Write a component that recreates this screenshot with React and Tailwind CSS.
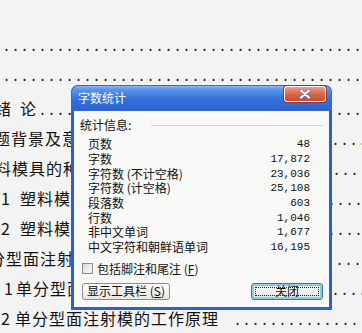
const DOTS = '.'.repeat(44)

function Leader() {
  return (
    <span className="font-['Liberation_Mono',monospace] text-[15px] tracking-normal text-[#222]">{DOTS}</span>
  )
}

function DocLine({ children }) {
  return (
    <div className="flex h-[30px] items-baseline whitespace-nowrap leading-[30px] text-[16px] tracking-[1px] text-[#111]">
      {children}
      <Leader />
    </div>
  )
}

const ROWS = [
  { label: '页数', value: '48' },
  { label: '字数', value: '17,872' },
  { label: '字符数 (不计空格)', value: '23,036' },
  { label: '字符数 (计空格)', value: '25,108' },
  { label: '段落数', value: '603' },
  { label: '行数', value: '1,046' },
  { label: '非中文单词', value: '1,677' },
  { label: '中文字符和朝鲜语单词', value: '16,195' },
]

function CloseButton() {
  return (
    <button
      type="button"
      className="flex h-[16px] w-[42px] items-center justify-center rounded-[3px] border border-white
                 bg-[linear-gradient(to_bottom,#f0a08c_0%,#de6a4f_45%,#c44a2e_100%)] shadow-[0_0_0_1px_#8a3a2a]"
    >
      <svg width="14" height="10" viewBox="0 0 14 10">
        <path d="M3 1.5 L11 8.5 M11 1.5 L3 8.5" stroke="#5a6fa8" strokeWidth="3.6" strokeLinecap="round" />
        <path d="M3 1.5 L11 8.5 M11 1.5 L3 8.5" stroke="#ffffff" strokeWidth="2.2" strokeLinecap="round" />
      </svg>
    </button>
  )
}

function WordCountDialog() {
  return (
    <div className="absolute left-[71px] top-[85px] flex h-[225px] w-[261px] flex-col font-['Noto_Sans_CJK_SC',sans-serif]">
      {/* Title bar */}
      <div className="flex h-[26px] shrink-0 items-start justify-between rounded-t-[7px] pl-[7px] pr-[6px] pt-px
                      bg-[linear-gradient(to_bottom,#9cc0f5_0%,#5b93ea_18%,#3470dc_55%,#2a63d4_100%)]
                      shadow-[inset_0_0_0_1px_#3a68c8]">
        <span className="mt-[5px] text-[12px] leading-[14px] text-white">字数统计</span>
        <CloseButton />
      </div>

      {/* Body */}
      <div className="flex flex-1 flex-col border-x-[3px] border-b-[3px] border-[#2b5fd3] bg-[#f8f8f6] text-[12px] text-[#111]">
        <div className="mt-[7px] flex items-center pl-[6px] pr-[5px]">
          <span className="leading-[14px]">统计信息:</span>
          <div className="ml-[20px] h-px flex-1 bg-[#d4d4cc]" />
        </div>

        <div className="mt-[5px] pl-[14px] pr-[19px]">
          {ROWS.map(r => (
            <div key={r.label} className="flex h-[14.7px] items-center justify-between leading-[14px]">
              <span>{r.label}</span>
              <span className="font-['Liberation_Mono',monospace] text-[11px]">{r.value}</span>
            </div>
          ))}
        </div>

        <div className="mt-[7px] flex items-center pl-[8px]">
          <span className="h-[11px] w-[11px] border border-[#8f8f8a] bg-[linear-gradient(135deg,#d8d8d2,#ffffff)]" />
          <span className="ml-[4px] leading-[14px]">
            包括脚注和尾注 (<span className="underline">F</span>)
          </span>
        </div>

        <div className="mt-[7px] flex items-center justify-between pl-[8px] pr-[6px]">
          <button
            type="button"
            className="flex h-[17px] w-[88px] items-center justify-center rounded-[3px] border border-[#8c8c88]
                       bg-[linear-gradient(to_bottom,#ffffff,#e6e6e2)] text-[12px] leading-[14px]"
          >
            显示工具栏 (<span className="underline">S</span>)
          </button>
          <button
            type="button"
            className="relative flex h-[17px] w-[72px] items-center justify-center rounded-[3px] border border-[#3d7a98]
                       bg-[linear-gradient(to_bottom,#ffffff,#e4e4e0)] text-[12px] leading-[14px]
                       shadow-[inset_0_0_0_2px_#8ccbe4]"
          >
            <span className="absolute inset-[3px] border border-dotted border-[#222]" />
            关闭
          </button>
        </div>
      </div>
    </div>
  )
}

export default function App() {
  return (
    <div className="relative h-[333px] w-[362px] overflow-hidden bg-[#f3f3f3] font-['Noto_Sans_CJK_SC',sans-serif]">
      <div className="flex flex-col pt-[33px]">
        <DocLine><span className="ml-[2px]" /></DocLine>
        <DocLine><span className="ml-[2px]" /></DocLine>
        <DocLine><span className="ml-[-5px]">绪</span><span className="ml-[8px] mr-[1px]">论</span></DocLine>
        <DocLine><span className="ml-[-23px] mr-[1px]">课题背景及意义</span></DocLine>
        <DocLine><span className="ml-[-22px] mr-[1px]">塑料模具的种类</span></DocLine>
        <DocLine><span className="ml-[1px]">1</span><span className="ml-[9px] mr-[1px]">塑料模具的成型方法</span></DocLine>
        <DocLine><span className="ml-[1px]">2</span><span className="ml-[9px] mr-[1px]">塑料模具的发展趋势</span></DocLine>
        <DocLine><span className="ml-[-28px] mr-[1px]">单分型面注射模</span></DocLine>
        <DocLine><span className="ml-[4px]">1</span><span className="ml-[2px] mr-[1px]">单分型面注射模的结构</span></DocLine>
        <DocLine><span className="ml-[1px]">2</span><span className="ml-[4px] mr-[14px]">单分型面注射模的工作原理</span></DocLine>
      </div>

      <WordCountDialog />
    </div>
  )
}
